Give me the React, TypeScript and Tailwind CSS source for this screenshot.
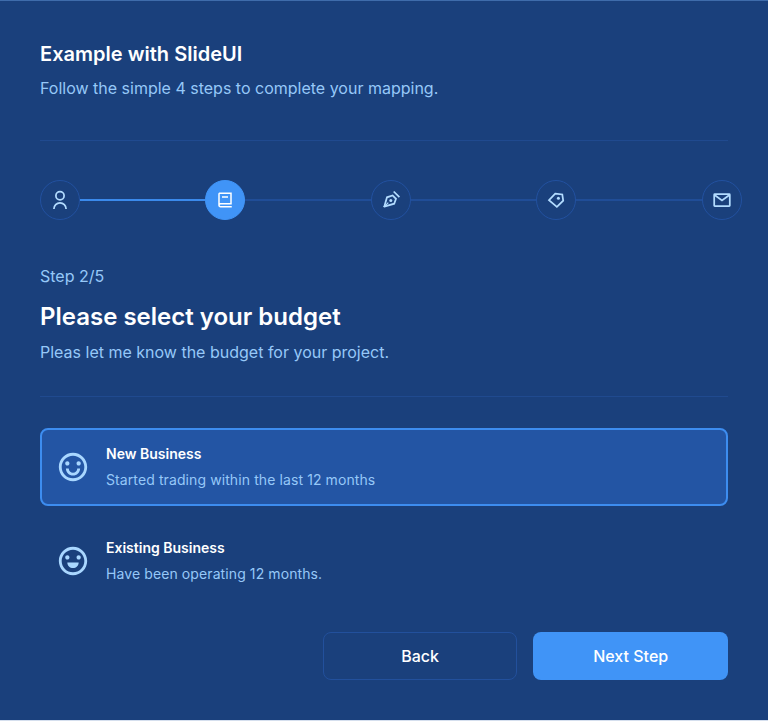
import { Fragment, type ReactNode } from "react";
import type { IconType } from "react-icons";
import { RiBook2Line, RiEmotionHappyLine, RiEmotionLine } from "react-icons/ri";

function Glyph({ children }: { children: ReactNode }) {
  return (
    <svg width="20" height="20" viewBox="0 0 20 20" fill="none" stroke="currentColor" strokeWidth="1.75">
      {children}
    </svg>
  );
}

const UserGlyph = () => (
  <Glyph>
    <circle cx="10" cy="5.8" r="4.1" />
    <path d="M3.9 19a6.1 6.1 0 0 1 12.2 0" />
  </Glyph>
);

const BookGlyph = () => <RiBook2Line size={18} />;

const NibGlyph = () => (
  <Glyph>
    <path d="M12.7 1.5l5.7 5.7" />
    <path d="M3.2 17L6 7.3l5.6-1.9 3.4 3.4-1.8 4.9-10 3z" />
    <path d="M2.8 17.2l4.5-4.5" strokeWidth="1.2" />
    <circle cx="9.8" cy="10.5" r="1.5" fill="currentColor" stroke="none" />
  </Glyph>
);

const TagGlyph = () => (
  <Glyph>
    <path d="M9.2 3.6l7.1.9.9 6.1-6.3 6.3L3 10.2z" />
    <circle cx="12.4" cy="8.2" r="1.5" fill="currentColor" stroke="none" />
  </Glyph>
);

const MailGlyph = () => (
  <Glyph>
    <rect x="2.2" y="4.2" width="15.6" height="12" rx="0.6" />
    <path d="M2.6 5l7.4 5.4L17.4 5" />
  </Glyph>
);

const steps = [UserGlyph, BookGlyph, NibGlyph, TagGlyph, MailGlyph];
const current = 1;

function Stepper() {
  return (
    <div className="flex h-10 w-[701.9px] items-center">
      {steps.map((Icon, i) => (
        <Fragment key={i}>
          {i > 0 && (
            <div className={`h-0.5 flex-1 ${i <= current ? "bg-[#3b8aec]" : "bg-[#204d97]"}`} />
          )}
          <div
            className={`flex size-10 shrink-0 items-center justify-center rounded-full border ${
              i === current
                ? "border-[#4094f7] bg-[#4094f7] text-white"
                : "border-[#2251a0] text-[#b3dcff]"
            }`}
          >
            <Icon />
          </div>
        </Fragment>
      ))}
    </div>
  );
}

type OptionProps = { icon: IconType; title: string; text: string; selected?: boolean };

function Option({ icon: Icon, title, text, selected }: OptionProps) {
  return (
    <button
      className={`flex h-[78px] w-full items-center gap-4 rounded-lg border-2 px-[14px] text-left ${
        selected ? "border-[#3d8df0] bg-[#2355a4]" : "border-transparent"
      }`}
    >
      <Icon size={34} className="shrink-0 text-[#a9d7ff]" />
      <span className="flex flex-col gap-1.5 whitespace-nowrap text-sm">
        <span className="font-semibold text-white">{title}</span>
        <span className="tracking-[0.007em] text-[#96c8f8]">{text}</span>
      </span>
    </button>
  );
}

export default function App() {
  return (
    <div className="h-[721px] w-[768px] border-b border-[#d5dfee] bg-[#1a407c] font-['Inter',sans-serif]">
      <main className="flex h-[720px] flex-col border-t border-[#3f6cab] px-10 pt-10">
        <h1 className="text-xl leading-[26px] font-semibold tracking-[0.001em] text-white">
          Example with SlideUI
        </h1>
        <p className="mt-[9px] text-base leading-6 text-[#96c8f8]">
          Follow the simple 4 steps to complete your mapping.
        </p>
        <hr className="mt-10 border-[#204a8f]" />
        <div className="mt-[39px]">
          <Stepper />
        </div>
        <p className="mt-11 text-base leading-6 text-[#96c8f8]">Step 2/5</p>
        <h2 className="mt-[13px] text-2xl leading-8 font-semibold text-white">
          Please select your budget
        </h2>
        <p className="mt-[7px] text-base leading-6 text-[#96c8f8]">
          Pleas let me know the budget for your project.
        </p>
        <hr className="mt-8 border-[#204a8f]" />
        <div className="mt-[31px] flex flex-col gap-4">
          <Option
            icon={RiEmotionHappyLine}
            title="New Business"
            text="Started trading within the last 12 months"
            selected
          />
          <Option
            icon={RiEmotionLine}
            title="Existing Business"
            text="Have been operating 12 months."
          />
        </div>
        <div className="mt-8 flex justify-end gap-4 text-base font-medium text-white">
          <button className="h-12 w-[194.6px] rounded-lg border border-[#22509c]">Back</button>
          <button className="h-12 w-[194.6px] rounded-lg bg-[#4094f7]">Next Step</button>
        </div>
      </main>
    </div>
  );
}
